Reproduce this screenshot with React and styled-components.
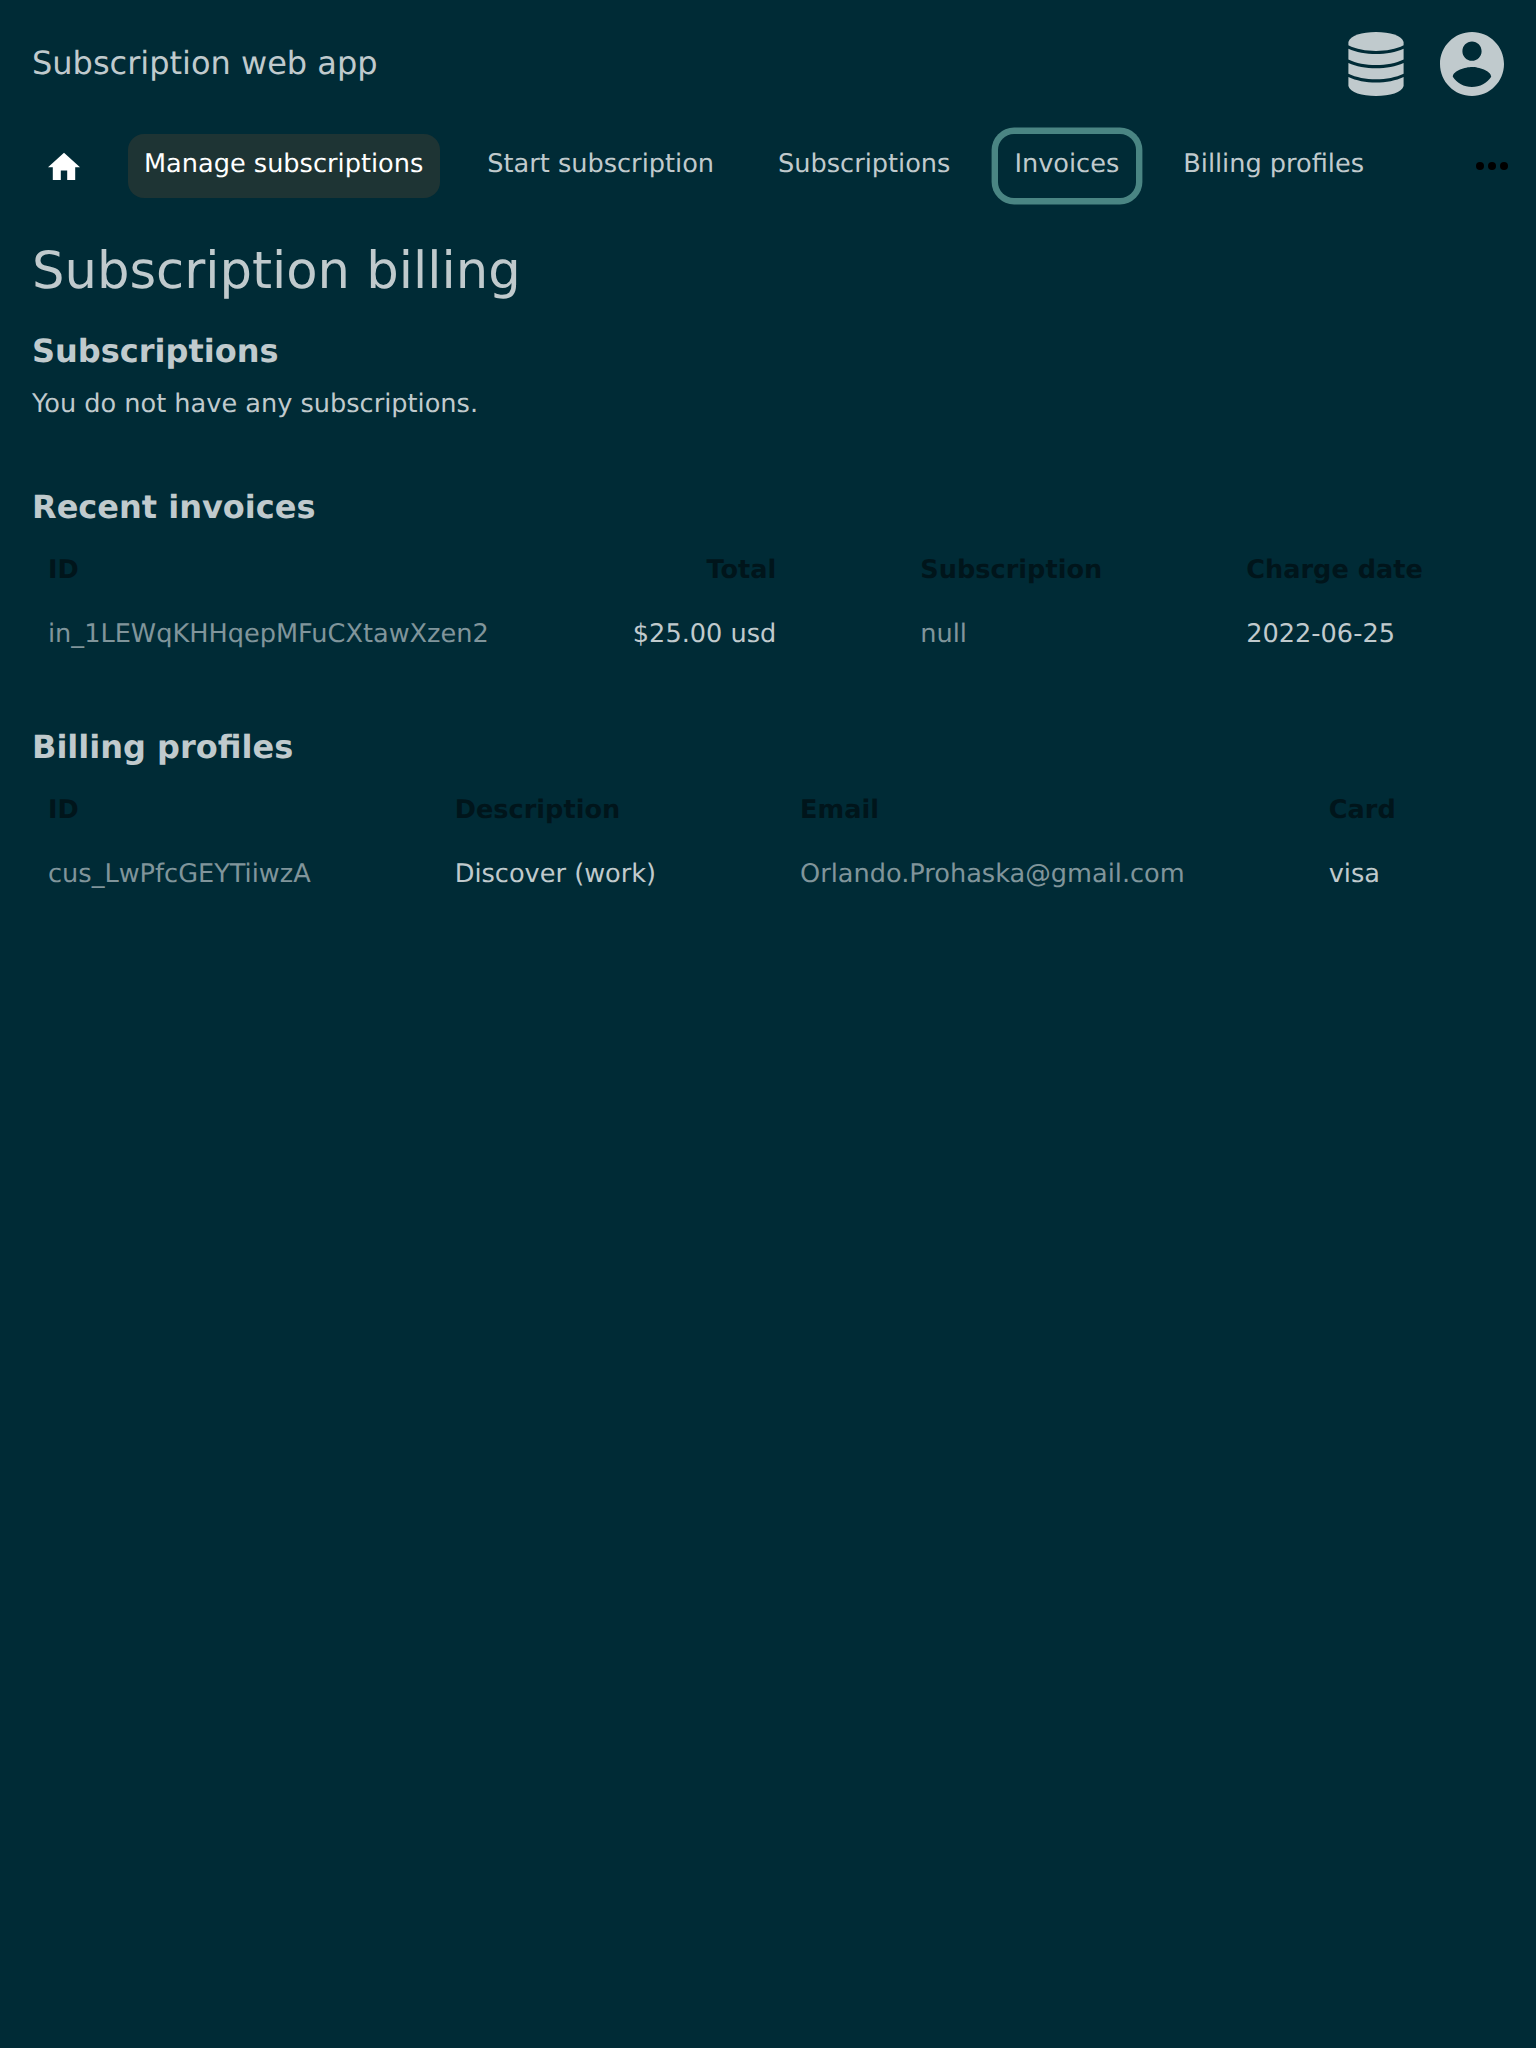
import React from "react";
import styled, { createGlobalStyle } from "styled-components";

const GlobalStyle = createGlobalStyle`
  * { box-sizing: border-box; }
  body {
    margin: 0;
    background: #002b36;
    color: #c0cacd;
    font-family: "DejaVu Sans", sans-serif;
    font-size: 25.6px;
    line-height: 32px;
    text-rendering: geometricPrecision;
  }
`;

const Page = styled.div`
  min-height: 2048px;
  overflow: hidden;
`;

const Header = styled.header`
  display: flex;
  align-items: center;
  justify-content: space-between;
  height: 128px;
  padding: 0 32px;
`;

const AppName = styled.div`
  padding-bottom: 2px;
  font-size: 32px;
  line-height: 40px;
`;

const HeaderIcons = styled.div`
  display: flex;
  gap: 36px;
`;

const Icon = styled.svg`
  display: block;
  flex: none;
  width: ${(p) => p.$w}px;
  height: ${(p) => p.$h}px;
  fill: ${(p) => p.$color || "#c0cacd"};
`;

const Nav = styled.nav`
  display: flex;
  align-items: center;
  gap: 31.5px;
  height: 76px;
  padding: 0 28px 0 32px;
`;

const HomeLink = styled.a`
  display: flex;
  align-items: center;
  height: 64px;
  padding: 0 16.5px 0 16px;
`;

const NavItem = styled.a`
  height: 64px;
  padding: 14px 16.5px 0 16px;
  border-radius: 16px;
  white-space: nowrap;
  color: ${(p) => (p.$active ? "#fff" : "#c0cacd")};
  background: ${(p) => (p.$active ? "#1e3434" : "transparent")};
  box-shadow: ${(p) => (p.$focused ? "0 0 0 6.4px #4a8583" : "none")};
`;

const More = styled.div`
  margin-left: auto;
`;

const Main = styled.main`
  padding: 35px 32px 0;
`;

const PageTitle = styled.h1`
  margin: 0 0 15px;
  font-size: 51.2px;
  line-height: 64px;
  font-weight: 400;
`;

const Section = styled.section`
  margin-bottom: 48px;
`;

const SectionTitle = styled.h2`
  height: 64px;
  margin: 0;
  padding-top: 1px;
  font-size: 32px;
  line-height: 64px;
  font-weight: 700;
`;

const Message = styled.p`
  height: 44px;
  margin: 0;
  line-height: 44px;
`;

const Table = styled.table`
  border-collapse: collapse;
  white-space: nowrap;
`;

const HeadCell = styled.th`
  height: 64px;
  padding: 0 128px 0 16px;
  text-align: ${(p) => p.$align || "left"};
  font-weight: 700;
  color: #00151b;
`;

const Cell = styled.td`
  height: 64px;
  padding: 0 128px 0 16px;
  text-align: ${(p) => p.$align || "left"};
  color: ${(p) => (p.$muted ? "#80959b" : "#c0cacd")};
`;

const DatabaseIcon = () => (
  <Icon $w={56} $h={64} viewBox="0 0 56 64">
    <path d="M0.400 10C2 3.500 14 0 28 0S54 3.500 55.600 10V13.300C48 17.300 38 19 28 19S8 17.300 0.400 13.300Z" />
    <path d="M0.400 16.700C8 20.300 18 22 28 22S48 20.300 55.600 16.700V27.500C48 31.300 38 33 28 33S8 31.300 0.400 27.500Z" />
    <path d="M0.400 31C8 34.600 18 36.300 28 36.300S48 34.600 55.600 31V41.800C48 45.500 38 47.300 28 47.300S8 45.500 0.400 41.800Z" />
    <path d="M0.400 45.100C8 48.800 18 50.600 28 50.600S48 48.800 55.600 45.100V54C54 60.500 42 64 28 64S2 60.500 0.400 54Z" />
  </Icon>
);

const AccountIcon = () => (
  <Icon $w={64} $h={64} viewBox="2 2 20 20">
    <path d="M12 2C6.480 2 2 6.480 2 12s4.480 10 10 10 10-4.480 10-10S17.520 2 12 2zm0 3c1.660 0 3 1.340 3 3s-1.340 3-3 3-3-1.340-3-3 1.340-3 3-3zm0 14.200c-2.500 0-4.710-1.280-6-3.220.03-1.990 4-3.080 6-3.080 1.990 0 5.970 1.090 6 3.080-1.290 1.940-3.500 3.220-6 3.220z" />
  </Icon>
);

const HomeIcon = () => (
  <Icon $w={32} $h={28} $color="#fff" viewBox="2 2.5 20 17.5">
    <path d="M10 20v-6h4v6h5v-8h3L12 3 2 12h3v8z" />
  </Icon>
);

const MoreIcon = () => (
  <Icon $w={32} $h={8} $color="#000" viewBox="4 10 16 4">
    <circle cx="6" cy="12" r="2" />
    <circle cx="12" cy="12" r="2" />
    <circle cx="18" cy="12" r="2" />
  </Icon>
);

const navItems = [
  { label: "Manage subscriptions", active: true },
  { label: "Start subscription" },
  { label: "Subscriptions" },
  { label: "Invoices", focused: true },
  { label: "Billing profiles" },
];

const invoiceColumns = [
  { title: "ID", muted: true },
  { title: "Total", align: "right" },
  { title: "Subscription", muted: true },
  { title: "Charge date" },
];
const invoices = [["in_1LEWqKHHqepMFuCXtawXzen2", "$25.00 usd", "null", "2022-06-25"]];

const profileColumns = [
  { title: "ID", muted: true },
  { title: "Description" },
  { title: "Email", muted: true },
  { title: "Card" },
];
const profiles = [["cus_LwPfcGEYTiiwzA", "Discover (work)", "Orlando.Prohaska@gmail.com", "visa"]];

const DataTable = ({ columns, rows }) => (
  <Table>
    <thead>
      <tr>
        {columns.map((c) => (
          <HeadCell key={c.title} $align={c.align}>{c.title}</HeadCell>
        ))}
      </tr>
    </thead>
    <tbody>
      {rows.map((row) => (
        <tr key={row[0]}>
          {row.map((value, i) => (
            <Cell key={i} $align={columns[i].align} $muted={columns[i].muted}>{value}</Cell>
          ))}
        </tr>
      ))}
    </tbody>
  </Table>
);

export default function App() {
  return (
    <Page>
      <GlobalStyle />
      <Header>
        <AppName>Subscription web app</AppName>
        <HeaderIcons>
          <DatabaseIcon />
          <AccountIcon />
        </HeaderIcons>
      </Header>
      <Nav>
        <HomeLink><HomeIcon /></HomeLink>
        {navItems.map((item) => (
          <NavItem key={item.label} $active={item.active} $focused={item.focused}>
            {item.label}
          </NavItem>
        ))}
        <More><MoreIcon /></More>
      </Nav>
      <Main>
        <PageTitle>Subscription billing</PageTitle>
        <Section>
          <SectionTitle>Subscriptions</SectionTitle>
          <Message>You do not have any subscriptions.</Message>
        </Section>
        <Section>
          <SectionTitle>Recent invoices</SectionTitle>
          <DataTable columns={invoiceColumns} rows={invoices} />
        </Section>
        <Section>
          <SectionTitle>Billing profiles</SectionTitle>
          <DataTable columns={profileColumns} rows={profiles} />
        </Section>
      </Main>
    </Page>
  );
}
